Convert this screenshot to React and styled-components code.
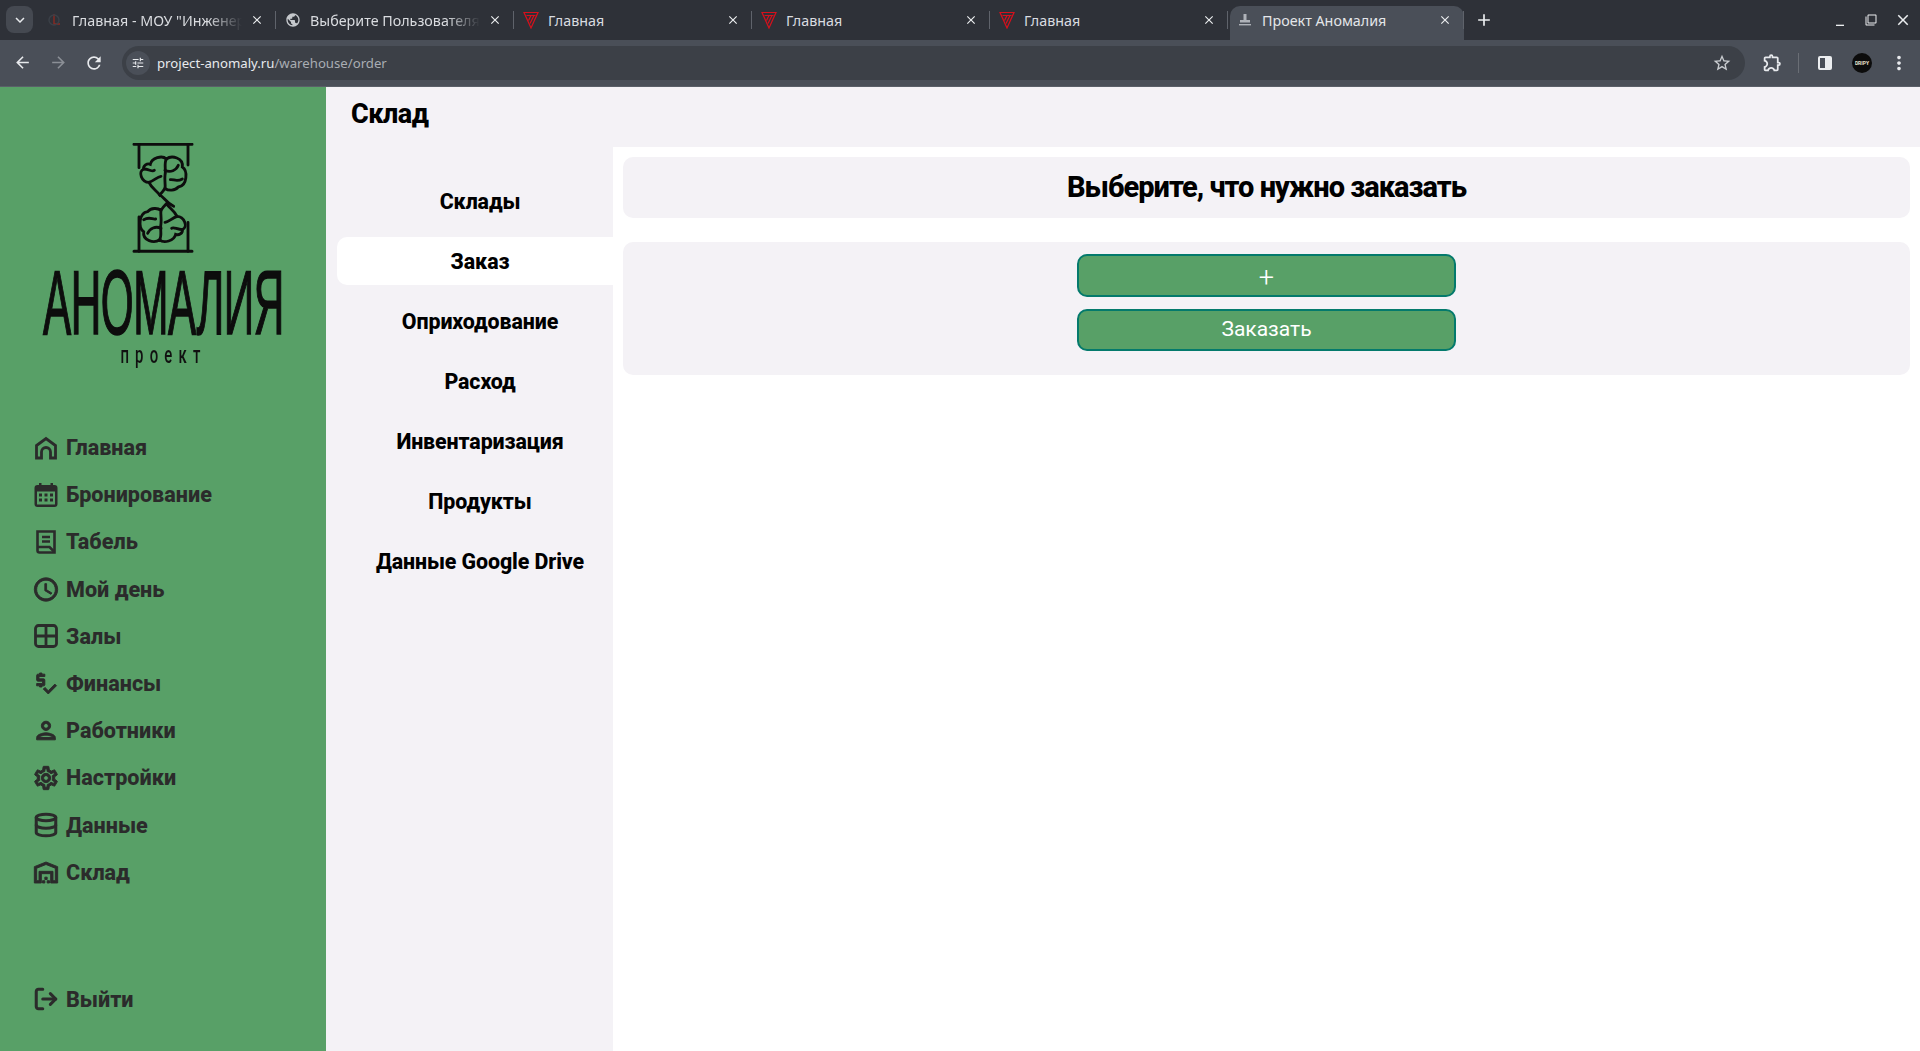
import styled, { createGlobalStyle } from 'styled-components';
import {
  MdOutlineAccessTime,
  MdOutlinePriceCheck,
  MdOutlinePerson,
  MdOutlineSettings,
  MdOutlineWarehouse,
  MdOutlineStarBorder,
  MdOutlineExtension,
  MdOutlineTune,
  MdMoreVert,
  MdArrowBack,
  MdArrowForward,
  MdRefresh,
  MdClose,
  MdAdd,
  MdExpandMore,
  MdPublic,
  MdMinimize,
  MdFilterNone,
} from 'react-icons/md';
import { LuDatabase, LuLogOut } from 'react-icons/lu';

const GlobalStyle = createGlobalStyle`
  html, body {
    margin: 0;
    padding: 0;
    height: 100%;
    overflow: hidden;
    background: #fff;
  }
  * {
    box-sizing: border-box;
  }
`;

const TriangleIcon = () => (
  <svg width="16" height="18" viewBox="0 0 16 18" fill="none" stroke="#d8101c" strokeWidth="1.2">
    <path d="M1 1.5h14L8 17z" />
    <path d="M3.5 4.5h9M11 4.5l-4 8M8 4.5l-2.5 5" />
  </svg>
);

const OldSiteIcon = () => (
  <svg width="16" height="16" viewBox="0 0 16 16" fill="none">
    <path d="M7 2v10h6" stroke="#8a2a22" strokeWidth="1.4" />
    <circle cx="7" cy="8" r="5" stroke="#3b4048" strokeWidth="1.4" />
  </svg>
);

const StampIcon = () => (
  <svg width="14" height="14" viewBox="0 0 14 14" fill="#aeb2b8">
    <rect x="5.5" y="1" width="3" height="6" />
    <rect x="2" y="7" width="10" height="2.5" />
    <rect x="1" y="11" width="12" height="1.4" />
  </svg>
);

const tabs = [
  { title: 'Главная - МОУ "Инженерный лицей"', icon: <OldSiteIcon />, fade: true },
  { title: 'Выберите Пользователя', icon: <MdPublic size={16} color="#c5c8cc" />, fade: true },
  { title: 'Главная', icon: <TriangleIcon /> },
  { title: 'Главная', icon: <TriangleIcon /> },
  { title: 'Главная', icon: <TriangleIcon /> },
  { title: 'Проект Аномалия', icon: <StampIcon />, active: true },
];

const BrainShape = () => (
  <>
    <path d="M392 132C396 112 428 104 440 116C456 104 492 112 488 140C504 150 504 196 476 200C466 212 446 212 436 204C430 214 426 218 420 224C410 210 396 204 388 186C366 186 354 154 372 146C370 136 382 128 392 132Z" />
    <path d="M440 116C432 130 440 150 436 165C434 180 438 192 436 204" />
    <path d="M436 150C452 158 470 150 476 135" />
    <path d="M372 146C388 146 398 156 404 150" />
    <path d="M388 186C404 180 412 170 424 168" />
    <path d="M452 178C462 176 470 186 488 176" />
  </>
);

const ProjectLogo = () => (
  <svg width="62" height="112" viewBox="337 68 186 336" fill="none" stroke="#0d0d0d" strokeWidth="8.5" strokeLinecap="round">
    <path d="M343 72h174M343 393h174" strokeWidth="9" />
    <path d="M358 72v70M505 72v62" />
    <path d="M358 393V290M505 393V306" />
    <path d="M420 224C432 228 438 246 462 258" />
    <BrainShape />
    <g transform="rotate(180 430 237)">
      <BrainShape />
    </g>
  </svg>
);

const HomeIcon = () => (
  <svg width="24" height="24" viewBox="0 0 24 24" fill="none" stroke="currentColor" strokeWidth="2.8">
    <path d="M2.500 22V9.500L12 2.500l9.500 7V22h-5v-6a4.500 4.500 0 0 0-9 0v6z" />
  </svg>
);

const CalendarIcon = () => (
  <svg width="26" height="26" viewBox="0 0 26 26" fill="currentColor">
    <path fillRule="evenodd" d="M6 1h2.500v2h9V1H20v2h1.500a3 3 0 0 1 3 3v16a3 3 0 0 1-3 3h-17a3 3 0 0 1-3-3V6a3 3 0 0 1 3-3H6zM4 9.500V22a.5.5 0 0 0 .5.5h17a.5.5 0 0 0 .5-.5V9.500z" />
    <path d="M6 11.500h3v3H6zM11.500 11.500h3v3h-3zM17 11.500h3v3h-3zM6 16.500h3v3H6zM11.500 16.500h3v3h-3zM17 16.500h3v3h-3z" />
  </svg>
);

const TimesheetIcon = () => (
  <svg width="24" height="26" viewBox="0 0 24 26" fill="none" stroke="currentColor" strokeWidth="2.6">
    <path d="M3.500 2.500h17v21h-15a2 2 0 0 1-2-2z" />
    <path d="M8 8h8M8 12.500h8M4 18h11.500l5 5" />
  </svg>
);

const HallsIcon = () => (
  <svg width="26" height="26" viewBox="0 0 26 26" fill="none" stroke="currentColor" strokeWidth="2.8">
    <rect x="2.500" y="2.500" width="21" height="21" rx="3" />
    <path d="M13 2.500v21M2.500 13h21" />
  </svg>
);

const menu = [
  { label: 'Главная', icon: <HomeIcon /> },
  { label: 'Бронирование', icon: <CalendarIcon /> },
  { label: 'Табель', icon: <TimesheetIcon /> },
  { label: 'Мой день', icon: <MdOutlineAccessTime size={31} />, heavy: true },
  { label: 'Залы', icon: <HallsIcon /> },
  { label: 'Финансы', icon: <MdOutlinePriceCheck size={29} />, heavy: true },
  { label: 'Работники', icon: <MdOutlinePerson size={31} />, heavy: true },
  { label: 'Настройки', icon: <MdOutlineSettings size={30} />, heavy: true },
  { label: 'Данные', icon: <LuDatabase size={26} strokeWidth={2.8} /> },
  { label: 'Склад', icon: <MdOutlineWarehouse size={31} />, heavy: true },
];

const sections = ['Склады', 'Заказ', 'Оприходование', 'Расход', 'Инвентаризация', 'Продукты', 'Данные Google Drive'];

export default function App() {
  return (
    <>
      <GlobalStyle />
      <Window>
        <TabStrip>
          <TabSearch>
            <MdExpandMore size={18} />
          </TabSearch>
          {tabs.map((tab, i) => (
            <Tab key={i} $active={tab.active}>
              <TabIcon>{tab.icon}</TabIcon>
              <TabTitle $fade={tab.fade} $active={tab.active}>{tab.title}</TabTitle>
              <MdClose size={14} color="#eceef0" />
            </Tab>
          ))}
          <NewTab>
            <MdAdd size={20} />
          </NewTab>
          <WindowControls>
            <MdMinimize size={16} />
            <MdFilterNone size={12} />
            <MdClose size={18} />
          </WindowControls>
        </TabStrip>
        <Toolbar>
          <ToolButton><MdArrowBack size={19} /></ToolButton>
          <ToolButton $muted><MdArrowForward size={19} /></ToolButton>
          <ToolButton><MdRefresh size={20} /></ToolButton>
          <Omnibox>
            <SiteInfo><MdOutlineTune size={14} /></SiteInfo>
            <Url>project-anomaly.ru<UrlPath>/warehouse/order</UrlPath></Url>
            <MdOutlineStarBorder size={20} color="#c9ccd0" />
          </Omnibox>
          <ToolActions>
            <MdOutlineExtension size={21} />
            <ToolDivider />
            <SidePanelIcon />
            <Avatar>DRIPY</Avatar>
            <MdMoreVert size={22} />
          </ToolActions>
        </Toolbar>
        <Page>
          <Sidebar>
            <LogoBlock>
              <ProjectLogo />
              <LogoName><LogoNameInner>АНОМАЛИЯ</LogoNameInner></LogoName>
              <LogoSub>проект</LogoSub>
            </LogoBlock>
            <Menu>
              {menu.map((item) => (
                <MenuItem key={item.label}>
                  <MenuIcon $heavy={item.heavy}>{item.icon}</MenuIcon>
                  {item.label}
                </MenuItem>
              ))}
            </Menu>
            <Logout>
              <MenuIcon><LuLogOut size={26} strokeWidth={2.8} /></MenuIcon>
              Выйти
            </Logout>
          </Sidebar>
          <Main>
            <PageTitle>Склад</PageTitle>
            <Body>
              <SubNav>
                {sections.map((name) => (
                  <SubNavItem key={name} $active={name === 'Заказ'}>{name}</SubNavItem>
                ))}
              </SubNav>
              <Content>
                <HeadingCard>Выберите, что нужно заказать</HeadingCard>
                <FormCard>
                  <GreenButton $plus>+</GreenButton>
                  <GreenButton>Заказать</GreenButton>
                </FormCard>
              </Content>
            </Body>
          </Main>
        </Page>
      </Window>
    </>
  );
}

const Window = styled.div`
  display: flex;
  flex-direction: column;
  height: 100vh;
  font-family: Roboto, "Liberation Sans", sans-serif;
`;

const TabStrip = styled.div`
  display: flex;
  align-items: flex-end;
  height: 40px;
  padding-left: 6px;
  background: #2e3138;
  flex: none;
`;

const TabSearch = styled.div`
  display: flex;
  align-items: center;
  justify-content: center;
  width: 27px;
  height: 27px;
  margin: 0 5px 7px 0;
  border-radius: 8px;
  background: #454951;
  color: #e8eaed;
`;

const Tab = styled.div`
  display: flex;
  align-items: center;
  width: ${(p) => (p.$active ? '234px' : '238px')};
  height: 34px;
  margin-left: ${(p) => (p.$active ? '2px' : '0')};
  padding: 0 12px 6px ${(p) => (p.$active ? '6px' : '8px')};
  border-radius: 10px 10px 0 0;
  background: ${(p) => (p.$active ? '#4a4f58' : 'transparent')};
  position: relative;

  &:not(:nth-last-of-type(-n + 2))::after {
    content: '';
    position: absolute;
    right: 0;
    top: 5px;
    width: 1px;
    height: 18px;
    background: #5f636b;
  }
`;

const TabIcon = styled.span`
  display: flex;
  align-items: center;
  justify-content: center;
  width: 18px;
  margin-right: 8px;
  flex: none;
`;

const TabTitle = styled.span`
  flex: 1;
  margin-right: ${(p) => (p.$fade ? '8px' : '0')};
  overflow: hidden;
  white-space: nowrap;
  font-family: "Noto Sans", sans-serif;
  font-size: 14.3px;
  color: ${(p) => (p.$active ? '#e4e6e9' : '#dadce0')};
  ${(p) => p.$fade && 'mask-image: linear-gradient(to right, #000 80%, transparent 100%);'}
`;

const NewTab = styled.div`
  display: flex;
  align-items: center;
  justify-content: center;
  width: 28px;
  height: 34px;
  margin-left: 6px;
  padding-bottom: 6px;
  color: #eceef0;
`;

const WindowControls = styled.div`
  display: flex;
  align-items: center;
  gap: 17px;
  height: 40px;
  margin-left: auto;
  padding-right: 8px;
  color: #eceef0;
`;

const Toolbar = styled.div`
  display: flex;
  align-items: center;
  height: 47px;
  padding: 0 0 1px 4px;
  background: #4a4f58;
  border-bottom: 1px solid #5a5f68;
  flex: none;
`;

const ToolButton = styled.div`
  display: flex;
  align-items: center;
  justify-content: center;
  width: 36px;
  height: 34px;
  color: ${(p) => (p.$muted ? '#8b8f96' : '#e8eaed')};
`;

const Omnibox = styled.div`
  display: flex;
  align-items: center;
  height: 34px;
  width: 1623px;
  margin-left: 10px;
  padding: 0 13px 0 4px;
  border-radius: 17px;
  background: #3c4047;
`;

const SiteInfo = styled.div`
  display: flex;
  align-items: center;
  justify-content: center;
  width: 24px;
  height: 24px;
  margin-right: 7px;
  border-radius: 50%;
  background: #4a4f58;
  color: #e8eaed;
`;

const Url = styled.div`
  flex: 1;
  font-family: "Noto Sans", sans-serif;
  font-size: 13.2px;
  color: #e8eaed;
`;

const UrlPath = styled.span`
  color: #a9adb3;
`;

const ToolActions = styled.div`
  display: flex;
  align-items: center;
  flex: 1;
  padding-left: 17px;
  color: #e8eaed;
`;

const ToolDivider = styled.div`
  width: 1px;
  height: 20px;
  margin: 0 19px 0 15px;
  background: #6a6e75;
`;

const SidePanelIcon = styled.div`
  width: 14px;
  height: 14px;
  margin-right: 20px;
  border: 2px solid #eceef0;
  border-radius: 2px;
  background: linear-gradient(to right, transparent 50%, #eceef0 50%);
`;

const Avatar = styled.div`
  display: flex;
  align-items: center;
  justify-content: center;
  width: 20px;
  height: 20px;
  margin-right: 16px;
  border-radius: 50%;
  background: #0c0c0c;
  font-size: 5px;
  font-weight: 700;
  color: #e8e2d0;
`;

const Page = styled.div`
  display: flex;
  flex: 1;
  min-height: 0;
`;

const Sidebar = styled.aside`
  display: flex;
  flex-direction: column;
  width: 326px;
  padding: 56px 0 28px;
  background: #58a067;
  flex: none;
`;

const LogoBlock = styled.div`
  display: flex;
  flex-direction: column;
  align-items: center;
  height: 281px;
`;

const LogoName = styled.div`
  display: flex;
  justify-content: center;
  width: 240px;
  height: 70px;
  margin-top: 13px;
`;

const LogoNameInner = styled.span`
  flex: none;
  font-family: "Liberation Sans", sans-serif;
  font-size: 90px;
  line-height: 70px;
  letter-spacing: -1px;
  color: #0d0d0d;
  -webkit-text-stroke: 1.6px #0d0d0d;
  transform: scaleX(0.47);
`;

const LogoSub = styled.div`
  margin-top: 6px;
  font-size: 24px;
  font-weight: 500;
  line-height: 22px;
  letter-spacing: 10px;
  color: #111;
  transform: scaleX(0.62);
`;

const Menu = styled.nav`
  display: flex;
  flex-direction: column;
`;

const MenuItem = styled.a`
  display: flex;
  align-items: center;
  height: 47.2px;
  padding-left: 32px;
  font-size: 21.6px;
  font-weight: 800;
  color: #2b2b2b;
`;

const Logout = styled(MenuItem)`
  margin-top: auto;
`;

const MenuIcon = styled.span`
  display: flex;
  align-items: center;
  justify-content: center;
  width: 28px;
  margin-right: 6px;

  ${(p) => p.$heavy && `
    svg { stroke: currentColor; stroke-width: 0.8; }
    svg path[fill='none'] { stroke: none; }
  `}
`;

const Main = styled.main`
  display: flex;
  flex-direction: column;
  flex: 1;
  min-width: 0;
  background: #f4f2f6;
`;

const PageTitle = styled.h1`
  height: 60px;
  margin: 0;
  padding: 8px 0 0 25px;
  font-size: 27px;
  font-weight: 800;
  line-height: 38px;
  letter-spacing: -0.5px;
  color: #000;
  flex: none;
`;

const Body = styled.div`
  display: flex;
  flex: 1;
`;

const SubNav = styled.nav`
  display: flex;
  flex-direction: column;
  gap: 12px;
  width: 287px;
  padding: 30px 0 0 11px;
  flex: none;
`;

const SubNavItem = styled.div`
  display: flex;
  align-items: center;
  justify-content: center;
  height: 48px;
  padding-left: 10px;
  border-radius: 10px 0 0 10px;
  background: ${(p) => (p.$active ? '#fff' : 'transparent')};
  font-size: 21.4px;
  font-weight: 800;
  letter-spacing: -0.1px;
  color: #000;
`;

const Content = styled.div`
  display: flex;
  flex-direction: column;
  gap: 24px;
  flex: 1;
  padding: 10px 10px 0;
  background: #fff;
`;

const HeadingCard = styled.div`
  display: flex;
  align-items: center;
  justify-content: center;
  height: 61px;
  padding-bottom: 2px;
  border-radius: 10px;
  background: #f4f2f6;
  font-size: 29px;
  font-weight: 800;
  letter-spacing: -1px;
  color: #000;
`;

const FormCard = styled.div`
  display: flex;
  flex-direction: column;
  align-items: center;
  gap: 12px;
  height: 133px;
  padding-top: 12px;
  border-radius: 10px;
  background: #f4f2f6;
`;

const GreenButton = styled.button`
  width: 379px;
  height: 42.5px;
  padding: ${(p) => (p.$plus ? '6px 0 0' : '0 0 2px')};
  border: 2px solid #047a6c;
  border-radius: 10px;
  background: #58a067;
  font-family: Roboto, sans-serif;
  font-size: ${(p) => (p.$plus ? '27px' : '21px')};
  font-weight: ${(p) => (p.$plus ? 300 : 400)};
  color: #fff;
`;
